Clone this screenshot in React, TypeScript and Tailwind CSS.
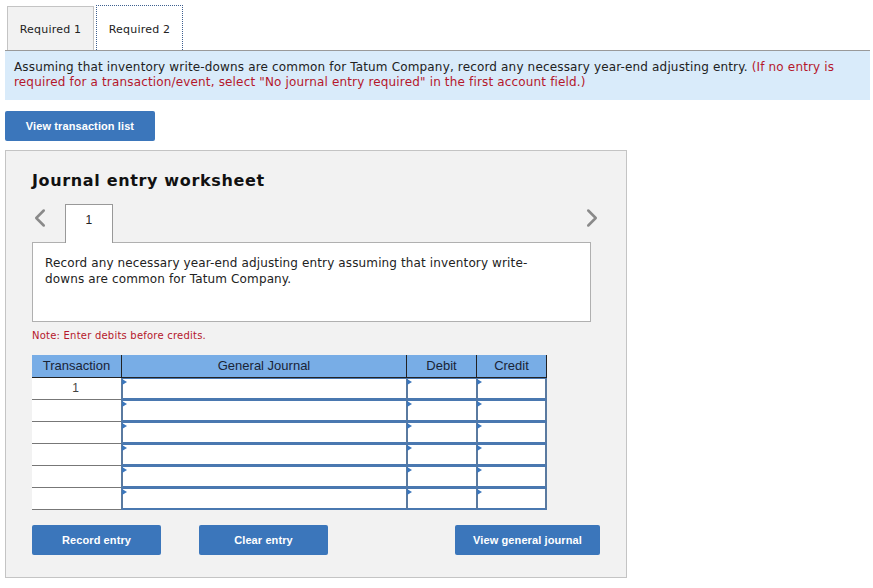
import { ChevronLeft, ChevronRight } from "lucide-react";

const rows = ["1", "", "", "", "", ""];

function InputCell({ width }: { width: string }) {
  return (
    <div className={`relative h-[22px] bg-white border-t border-b-2 border-l-2 border-[#4a78b0] border-l-[#5a7aa0] ${width}`}>
      <span className="absolute left-[-1px] top-0 w-0 h-0 border-y-[3px] border-y-transparent border-l-[5px] border-l-[#3b76bb]" />
    </div>
  );
}

function BlueButton({ label, width }: { label: string; width: string }) {
  return (
    <button className={`h-[30px] ${width} rounded-[2px] bg-[#3b76bb] text-white text-[11px] tracking-[0.1px] font-bold font-['Liberation_Sans',sans-serif]`}>
      {label}
    </button>
  );
}

export default function App() {
  return (
    <div className="w-[873px] h-[588px] bg-white pl-[5px] pr-[3px] pt-[5px] overflow-hidden font-['DejaVu_Sans',sans-serif] text-[12px] tracking-[0.16px] text-[#222]">
      {/* Tabs */}
      <div className="flex items-end h-[46px] pl-[2px] gap-[2px] border-b border-[#999]">
        <div className="w-[87px] h-[44px] pt-[3px] flex items-center justify-center bg-[#f2f2f2] border border-b-0 border-[#c4c4c4] text-[11px] tracking-[0.2px]">
          Required 1
        </div>
        <div className="w-[87px] h-[45px] pt-[4px] flex items-center justify-center bg-white border border-b-0 border-dotted border-[#3d5f8f] text-[11px] tracking-[0.2px]">
          Required 2
        </div>
      </div>

      {/* Instructions */}
      <div className="h-[49px] bg-[#d9ebfa] px-[9px] pt-[9px] leading-[15px]">
        Assuming that inventory write-downs are common for Tatum Company, record any necessary year-end adjusting entry.{" "}
        <span className="text-[#b5172b]">
          (If no entry is required for a transaction/event, select "No journal entry required" in the first account field.)
        </span>
      </div>

      <div className="mt-[11px]">
        <BlueButton label="View transaction list" width="w-[150px]" />
      </div>

      {/* Worksheet */}
      <div className="mt-[9px] w-[622px] h-[428px] bg-[#f2f2f2] border border-[#c4c4c4] pl-[26px] pt-[20px]">
        <h2 className="text-[16px] tracking-[0.65px] leading-[20px] font-bold text-[#111]">Journal entry worksheet</h2>

        <div className="relative flex items-end h-[38px] mt-[13px] w-[559px]">
          <ChevronLeft className="absolute left-[-7px] top-[-1px] text-[#8a8a8a]" size={30} strokeWidth={2} />
          <div className="relative z-10 ml-[33px] mb-[-1px] w-[48px] h-[39px] pb-[8px] flex items-center justify-center bg-white border border-b-0 border-[#999] font-['Liberation_Sans',sans-serif] text-[12px]">
            1
          </div>
          <ChevronRight className="absolute right-[-16px] top-[-1px] text-[#8a8a8a]" size={30} strokeWidth={2} />
        </div>

        <div className="w-[559px] h-[80px] bg-white border border-[#b0b0b0] pl-[12px] pt-[12px] pr-[50px] leading-[16px] tracking-[0.13px]">
          Record any necessary year-end adjusting entry assuming that inventory write-downs are common for Tatum Company.
        </div>

        <p className="mt-[7px] text-[10px] tracking-[0.22px] leading-[13px] text-[#b5172b]">Note: Enter debits before credits.</p>

        {/* Journal table */}
        <div className="mt-[13px] w-[515px] font-['Liberation_Sans',sans-serif] text-[12px] tracking-normal">
          <div className="flex h-[23px] bg-[#78ade6] border-b border-[#222] text-[13px] text-[#1a2436] text-center leading-[21px]">
            <div className="w-[90px] border-r border-[#222]">Transaction</div>
            <div className="w-[285px] border-r border-[#222]">General Journal</div>
            <div className="w-[70px] border-r border-[#222]">Debit</div>
            <div className="w-[70px] border-r border-[#222]">Credit</div>
          </div>
          {rows.map((txn, i) => (
            <div key={i} className="flex h-[22px]">
              <div className="w-[89px] h-[22px] pr-[2px] bg-white border-b border-[#777] text-center text-[#444] leading-[20px]">{txn}</div>
              <InputCell width="w-[285px]" />
              <InputCell width="w-[70px]" />
              <InputCell width="w-[71px] border-r-2 border-r-[#5a7aa0]" />
            </div>
          ))}
        </div>

        {/* Actions */}
        <div className="flex mt-[15px] w-[568px]">
          <BlueButton label="Record entry" width="w-[129px]" />
          <div className="ml-[38px]">
            <BlueButton label="Clear entry" width="w-[129px]" />
          </div>
          <div className="ml-auto">
            <BlueButton label="View general journal" width="w-[145px]" />
          </div>
        </div>
      </div>
    </div>
  );
}
